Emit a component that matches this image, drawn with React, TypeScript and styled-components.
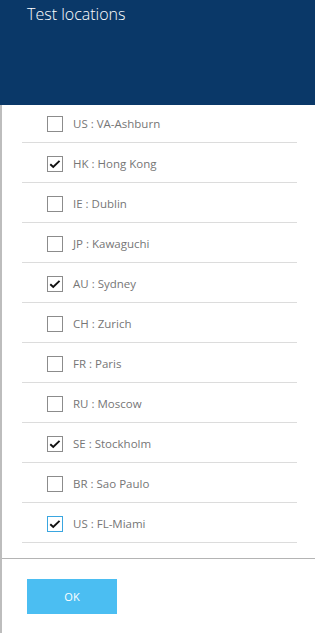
import React, { useState } from 'react';
import styled, { createGlobalStyle } from 'styled-components';

const GlobalStyle = createGlobalStyle`
  html, body {
    margin: 0;
    padding: 0;
    background: #ffffff;
  }
  body {
    font-family: "Open Sans", "Noto Sans", sans-serif;
  }
`;

interface Location {
  code: string;
  name: string;
  checked: boolean;
}

const initialLocations: Location[] = [
  { code: 'US', name: 'VA-Ashburn', checked: false },
  { code: 'HK', name: 'Hong Kong', checked: true },
  { code: 'IE', name: 'Dublin', checked: false },
  { code: 'JP', name: 'Kawaguchi', checked: false },
  { code: 'AU', name: 'Sydney', checked: true },
  { code: 'CH', name: 'Zurich', checked: false },
  { code: 'FR', name: 'Paris', checked: false },
  { code: 'RU', name: 'Moscow', checked: false },
  { code: 'SE', name: 'Stockholm', checked: true },
  { code: 'BR', name: 'Sao Paulo', checked: false },
  { code: 'US', name: 'FL-Miami', checked: true },
];

const App: React.FC = () => {
  const [locations, setLocations] = useState(initialLocations);
  const [focused, setFocused] = useState(initialLocations.length - 1);

  const toggle = (index: number) => {
    setFocused(index);
    setLocations((prev) =>
      prev.map((loc, i) => (i === index ? { ...loc, checked: !loc.checked } : loc))
    );
  };

  return (
    <>
      <GlobalStyle />
      <Blade>
        <Header>
          <Title>Test locations</Title>
        </Header>
        <Body>
          <List>
            {locations.map((loc, i) => (
              <Row key={`${loc.code}-${loc.name}`} onClick={() => toggle(i)}>
                <Box $focused={i === focused}>
                  {loc.checked && (
                    <svg viewBox="0 0 16 16" width="14" height="14">
                      <path
                        d="M2.6 8.2 L6 11.4 L13.2 4.4"
                        fill="none"
                        stroke="#111"
                        strokeWidth="2.2"
                      />
                    </svg>
                  )}
                </Box>
                <Label>
                  {loc.code} : {loc.name}
                </Label>
              </Row>
            ))}
          </List>
          <Footer>
            <OkButton type="button">OK</OkButton>
          </Footer>
        </Body>
      </Blade>
    </>
  );
};

const Blade = styled.div`
  width: 315px;
  height: 633px;
  display: flex;
  flex-direction: column;
  overflow: hidden;
`;

const Header = styled.div`
  height: 105px;
  flex-shrink: 0;
  background: #0a3868;
  padding: 3px 0 0 27px;
  box-sizing: border-box;
`;

const Title = styled.h1`
  margin: 0;
  font-family: "Open Sans", "Noto Sans", sans-serif;
  font-weight: 300;
  font-size: 16px;
  line-height: 22px;
  color: #ffffff;
`;

const Body = styled.div`
  flex: 1;
  display: flex;
  flex-direction: column;
  border-left: 2px solid #bdbdbd;
`;

const List = styled.div`
  height: 453px;
  flex-shrink: 0;
  padding: 0 18px 0 20px;
  box-sizing: border-box;
`;

const Row = styled.div`
  height: 37px;
  display: flex;
  align-items: center;
  gap: 10px;
  padding: 2px 0 0 25px;
  border-bottom: 1px solid #dcdcdc;
  cursor: pointer;

  &:first-child {
    height: 37px;
    padding-top: 0;
  }
`;

const Box = styled.span<{ $focused: boolean }>`
  width: 16px;
  height: 16px;
  box-sizing: border-box;
  border: 1px solid ${(p) => (p.$focused ? '#3aa6e0' : '#8c8c8c')};
  display: flex;
  align-items: center;
  justify-content: center;
  background: #ffffff;
  flex-shrink: 0;
`;

const Label = styled.span`
  font-size: 11.5px;
  color: #767676;
  white-space: nowrap;
`;

const Footer = styled.div`
  flex: 1;
  border-top: 1px solid #b4b4b4;
  padding: 20px 0 0 25px;
`;

const OkButton = styled.button`
  width: 90px;
  height: 35px;
  border: none;
  background: #4bbef2;
  color: #ffffff;
  font-family: "Open Sans", "Noto Sans", sans-serif;
  font-size: 11px;
  cursor: pointer;
`;

export default App;
